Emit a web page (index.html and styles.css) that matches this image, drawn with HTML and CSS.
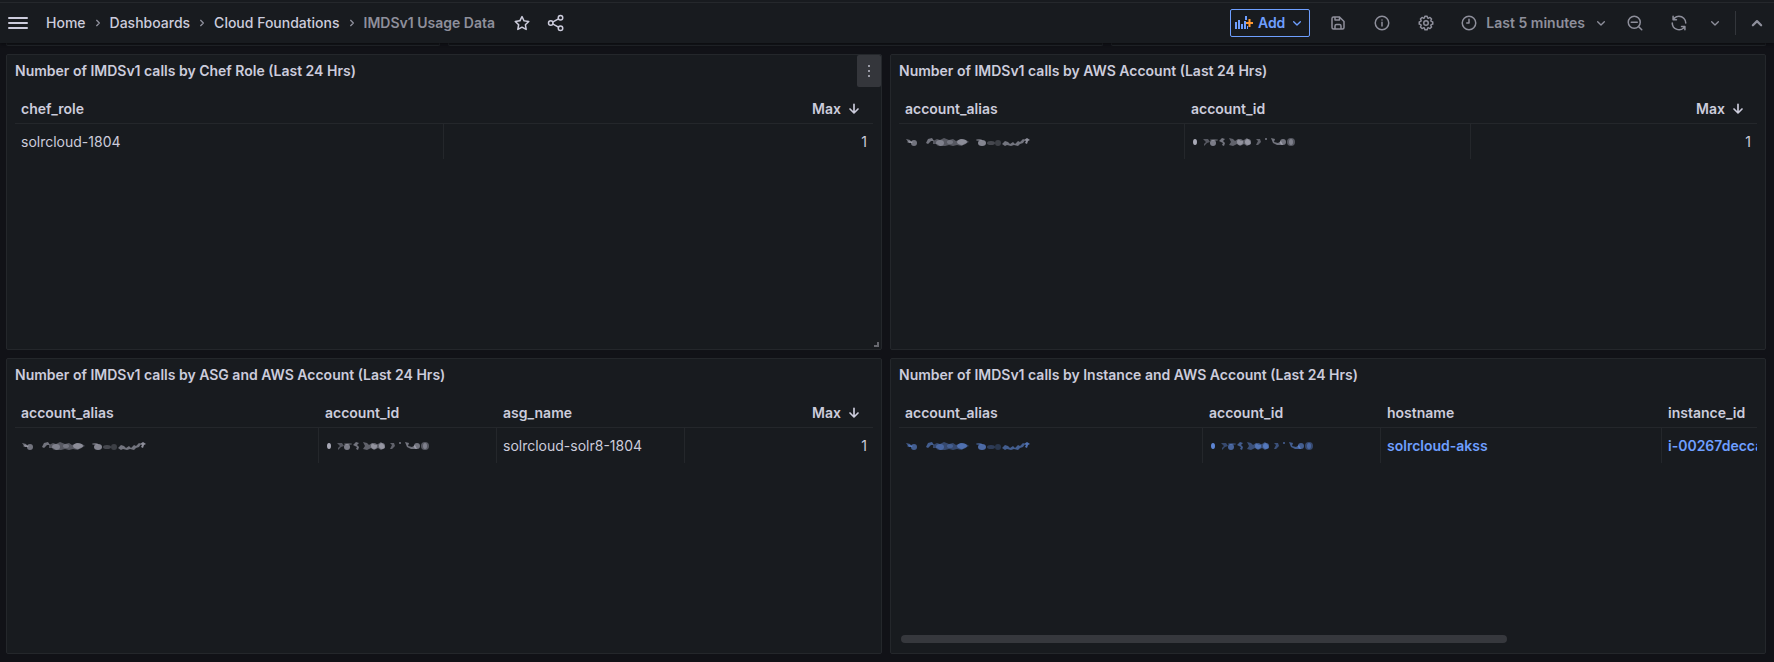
FILE: index.html
```html
<!DOCTYPE html>
<html lang="en">
<head>
	<meta charset="UTF-8">
	<meta name="viewport" content="width=device-width, initial-scale=1">
	<title>IMDSv1 Usage Data - Dashboards</title>
	<link rel="stylesheet" href="styles.css">
</head>
<body>
	<!-- shared icons -->
	<svg class="defs" aria-hidden="true">
		<symbol id="i-right" viewBox="0 0 24 24"><path class="line" d="M10 8l4 4-4 4"/></symbol>
		<symbol id="i-down" viewBox="0 0 24 24"><path class="line" d="M7 10l5 5 5-5"/></symbol>
		<symbol id="i-arrow" viewBox="0 0 24 24"><path class="line bold" d="M12 5v13M6 12l6 6 6-6"/></symbol>
		<symbol id="r-alias" viewBox="0 0 128 12">
			<g filter="url(#smudge)">
				<path d="M1 3l4 1 2 3-3 0zM21 7l2-4 4-1 2 3-3 0-3 3z" opacity=".5"/>
				<ellipse cx="9" cy="7" rx="3" ry="3" opacity=".5"/>
				<ellipse cx="5" cy="6" rx="3" ry="1" opacity=".3"/>
				<path d="M28 5l4-2 3 1 4-2 5 2 4-1 3 2 5-2 5 1 3 2-5 2-2 2-5-1-4 1-4-1-4 1-5 0-3-2-4 0z" opacity=".35"/>
				<ellipse cx="35" cy="7" rx="4" ry="3" opacity=".35"/>
				<ellipse cx="45" cy="6" rx="3" ry="2" opacity=".25"/>
				<ellipse cx="57" cy="6" rx="5" ry="3" opacity=".45"/>
				<ellipse cx="77" cy="7" rx="4" ry="3" opacity=".6"/>
				<ellipse cx="74" cy="4" rx="3" ry="1" opacity=".4"/>
				<ellipse cx="86" cy="7" rx="4" ry="2" opacity=".25"/>
				<ellipse cx="93" cy="7" rx="3" ry="3" opacity=".2"/>
				<path d="M97 8l3-3 3 1 2 2 3-2 2 2 3-3 2 1 3-3 2 1-2 3-3 1-2 2-4-1-3 1-4-1-2 1z" opacity=".5"/>
				<path d="M119 4l3-2 3 2-2 1-1 3-2-1 1-2z" opacity=".65"/>
			</g>
		</symbol>
		<symbol id="r-id" viewBox="0 0 108 12">
			<g filter="url(#smudge)">
				<ellipse cx="4" cy="6" rx="2" ry="3" opacity=".8"/>
				<path d="M12 3l5 0 2 3-3 1-3 3 0-2 2-2z" opacity=".35"/>
				<ellipse cx="22" cy="7" rx="3" ry="3" opacity=".55"/>
				<ellipse cx="23" cy="4" rx="4" ry="1" opacity=".3"/>
				<path d="M28 5l3-3 3 1-2 2 2 2-1 3-2-1 1-2z" opacity=".5"/>
				<path d="M38 2l4 1 2 2 3-2 3 2 3-1 3-2 3 3 1 3-4 2-3-2-4 2-3-2-4 2-4-1 2-3z" opacity=".4"/>
				<ellipse cx="49" cy="6" rx="3" ry="3" opacity=".45"/>
				<ellipse cx="57" cy="6" rx="3" ry="3" opacity=".5"/>
				<path d="M65 3l4 0 1 3-3 3-2 0 2-4zM74 2h2v2h-2z" opacity=".4"/>
				<path d="M80 2l4 1-1 3 4 1 3-2 2 4-6 0-4-2z" opacity=".5"/>
				<ellipse cx="92" cy="6" rx="3" ry="3" opacity=".5"/>
				<ellipse cx="100" cy="6" rx="4" ry="4" opacity=".35"/>
				<ellipse cx="100" cy="6" rx="2" ry="3" opacity=".35"/>
			</g>
		</symbol>
		<filter id="smudge"><feGaussianBlur stdDeviation="0.6"/></filter>
	</svg>

	<header class="topbar">
		<button class="menu" aria-label="Open menu"><span></span><span></span><span></span></button>
		<nav class="crumbs" aria-label="Breadcrumbs">
			<a href="#">Home</a>
			<svg class="icon"><use href="#i-right"/></svg>
			<a href="#">Dashboards</a>
			<svg class="icon"><use href="#i-right"/></svg>
			<a href="#">Cloud Foundations</a>
			<svg class="icon"><use href="#i-right"/></svg>
			<span class="current">IMDSv1 Usage Data</span>
		</nav>
		<button class="mark" aria-label="Mark as favorite">
			<svg class="icon big" viewBox="0 0 24 24"><path d="M22,9.67A1,1,0,0,0,21.14,9l-5.69-.83L12.9,3a1,1,0,0,0-1.8,0L8.55,8.16,2.86,9a1,1,0,0,0-.81.68,1,1,0,0,0,.25,1l4.13,4-1,5.68A1,1,0,0,0,6.9,21.44L12,18.77l5.1,2.67a.93.93,0,0,0,.46.12,1,1,0,0,0,.59-.19,1,1,0,0,0,.4-1l-1-5.68,4.13-4A1,1,0,0,0,22,9.67Zm-6.15,4a1,1,0,0,0-.29.88l.72,4.2-3.76-2a1.06,1.06,0,0,0-.94,0l-3.76,2,.72-4.2a1,1,0,0,0-.29-.88l-3-3,4.21-.61a1,1,0,0,0,.76-.55L12,5.7l1.88,3.82a1,1,0,0,0,.76.55l4.21.61Z"/></svg>
		</button>
		<button class="mark" aria-label="Share dashboard">
			<svg class="icon big" viewBox="0 0 24 24"><g class="line"><circle cx="5" cy="12" r="3"/><circle cx="18" cy="5" r="3"/><circle cx="18" cy="19" r="3"/><path d="M8 10.500l7.300-4M8 13.500l7.300 4"/></g></svg>
		</button>

		<div class="toolbar">
			<button class="add">
				<svg class="panel-add" viewBox="0 0 19 14"><path d="M0 6h2v7H0zM3 4h2v9H3zM6 8h2v5H6zM9 5h2v8H9zM10 0h2v4h-2zM12 10h1v3h-1z"/><path class="plus" d="M13.500 3h2v3H18v2h-2.500v3h-2V8H11V6h2.500z"/></svg>
				Add
				<svg class="icon"><use href="#i-down"/></svg>
			</button>
			<button class="tool" aria-label="Save dashboard">
				<svg class="icon big" viewBox="0 0 24 24"><path d="M20.710,9.290l-6-6a1,1,0,0,0-.32-.21A1.090,1.090,0,0,0,14,3H6A3,3,0,0,0,3,6V18a3,3,0,0,0,3,3H18a3,3,0,0,0,3-3V10A1,1,0,0,0,20.710,9.290ZM9,5h4V7H9Zm6,14H9V16a1,1,0,0,1,1-1h4a1,1,0,0,1,1,1Zm4-1a1,1,0,0,1-1,1H17V16a3,3,0,0,0-3-3H10a3,3,0,0,0-3,3v3H6a1,1,0,0,1-1-1V6A1,1,0,0,1,6,5H7V8A1,1,0,0,0,8,9h6a1,1,0,0,0,1-1V6.410l4,4Z"/></svg>
			</button>
			<button class="tool" aria-label="Dashboard insights">
				<svg class="icon big" viewBox="0 0 24 24"><g class="line"><circle cx="12" cy="12" r="9"/><path d="M12 11v5M12 8v0"/></g></svg>
			</button>
			<button class="tool" aria-label="Dashboard settings">
				<svg class="icon big" viewBox="0 0 24 24"><path d="M21.32,9.55l-1.89-.63.89-1.78A1,1,0,0,0,20.13,6L18,3.87a1,1,0,0,0-1.15-.19l-1.78.89-.63-1.89A1,1,0,0,0,13.5,2h-3a1,1,0,0,0-.95.68L8.92,4.57,7.14,3.68A1,1,0,0,0,6,3.87L3.87,6a1,1,0,0,0-.19,1.15l.89,1.78-1.89.63A1,1,0,0,0,2,10.5v3a1,1,0,0,0,.68.95l1.89.63-.89,1.78A1,1,0,0,0,3.87,18L6,20.13a1,1,0,0,0,1.15.19l1.78-.89.63,1.89a1,1,0,0,0,.95.68h3a1,1,0,0,0,.95-.68l.63-1.89,1.78.89A1,1,0,0,0,18,20.13L20.13,18a1,1,0,0,0,.19-1.15l-.89-1.78,1.89-.63A1,1,0,0,0,22,13.5v-3A1,1,0,0,0,21.32,9.55ZM20,12.78l-1.2.4A2,2,0,0,0,17.64,16l.57,1.14-1.1,1.1L16,17.64a2,2,0,0,0-2.79,1.16l-.4,1.2H11.22l-.4-1.2A2,2,0,0,0,8,17.64l-1.14.57-1.1-1.1L6.36,16A2,2,0,0,0,5.2,13.18L4,12.78V11.22l1.2-.4A2,2,0,0,0,6.36,8L5.79,6.89l1.1-1.1L8,6.36A2,2,0,0,0,10.82,5.2l.4-1.2h1.56l.4,1.2A2,2,0,0,0,16,6.36l1.14-.57,1.1,1.1L17.64,8a2,2,0,0,0,1.16,2.79l1.2.4ZM12,8a4,4,0,1,0,4,4A4,4,0,0,0,12,8Zm0,6a2,2,0,1,1,2-2A2,2,0,0,1,12,14Z"/></svg>
			</button>
			<button class="time">
				<svg class="icon big" viewBox="0 0 24 24"><g class="line"><circle cx="12" cy="12" r="9"/><path d="M12 7v5H9"/></g></svg>
				Last 5 minutes
				<svg class="icon caret"><use href="#i-down"/></svg>
			</button>
			<button class="tool" aria-label="Zoom out time range">
				<svg class="icon big" viewBox="0 0 24 24"><g class="line"><circle cx="11" cy="11" r="8"/><path d="M7 11h8M17 17l4 4"/></g></svg>
			</button>
			<button class="tool" aria-label="Refresh dashboard">
				<svg class="icon big" viewBox="0 0 24 24"><path d="M19.91,15.51H15.38a1,1,0,0,0,0,2h2.4A8,8,0,0,1,4,12a1,1,0,0,0-2,0,10,10,0,0,0,16.88,7.23V21a1,1,0,0,0,2,0V16.5A1,1,0,0,0,19.91,15.51ZM12,2A10,10,0,0,0,5.12,4.77V3a1,1,0,0,0-2,0V7.5a1,1,0,0,0,1,1h4.5a1,1,0,0,0,0-2H6.22A8,8,0,0,1,20,12a1,1,0,0,0,2,0A10,10,0,0,0,12,2Z"/></svg>
			</button>
			<button aria-label="Refresh interval"><svg class="icon"><use href="#i-down"/></svg></button>
			<span class="divider"></span>
			<button aria-label="Hide top bar"><svg class="icon big" viewBox="0 0 24 24"><path class="line thick" d="M6.500 15l5.500-5.500 5.500 5.500"/></svg></button>
		</div>
	</header>

	<!-- bottom edge of the row scrolled under the top bar -->
	<div class="scrolled-row"><div></div><div></div><div></div></div>

	<main class="grid">
		<section class="panel">
			<div class="panel-head">
				<h2>Number of IMDSv1 calls by Chef Role (Last 24 Hrs)</h2>
				<button class="kebab" aria-label="Panel menu"><i></i><i></i><i></i></button>
			</div>
			<div class="panel-body">
				<table>
					<thead>
						<tr><th>chef_role</th><th class="num">Max<svg class="icon sort"><use href="#i-arrow"/></svg></th></tr>
					</thead>
					<tbody>
						<tr><td>solrcloud-1804</td><td class="num">1</td></tr>
					</tbody>
				</table>
			</div>
			<span class="resize"></span>
		</section>

		<section class="panel">
			<div class="panel-head">
				<h2>Number of IMDSv1 calls by AWS Account (Last 24 Hrs)</h2>
			</div>
			<div class="panel-body">
				<table>
					<thead>
						<tr><th>account_alias</th><th>account_id</th><th class="num">Max<svg class="icon sort"><use href="#i-arrow"/></svg></th></tr>
					</thead>
					<tbody>
						<tr>
							<td><svg class="alias"><use href="#r-alias"/></svg></td>
							<td><svg class="id"><use href="#r-id"/></svg></td>
							<td class="num">1</td>
						</tr>
					</tbody>
				</table>
			</div>
		</section>

		<section class="panel">
			<div class="panel-head">
				<h2>Number of IMDSv1 calls by ASG and AWS Account (Last 24 Hrs)</h2>
			</div>
			<div class="panel-body">
				<table>
					<colgroup><col class="col-alias"><col class="col-id"><col><col></colgroup>
					<thead>
						<tr><th>account_alias</th><th>account_id</th><th>asg_name</th><th class="num">Max<svg class="icon sort"><use href="#i-arrow"/></svg></th></tr>
					</thead>
					<tbody>
						<tr>
							<td><svg class="alias"><use href="#r-alias"/></svg></td>
							<td><svg class="id"><use href="#r-id"/></svg></td>
							<td>solrcloud-solr8-1804</td>
							<td class="num">1</td>
						</tr>
					</tbody>
				</table>
			</div>
		</section>

		<section class="panel">
			<div class="panel-head">
				<h2>Number of IMDSv1 calls by Instance and AWS Account (Last 24 Hrs)</h2>
			</div>
			<div class="panel-body">
				<table class="wide">
					<colgroup><col class="col-alias"><col class="col-id"><col class="col-host"><col></colgroup>
					<thead>
						<tr><th>account_alias</th><th>account_id</th><th>hostname</th><th>instance_id</th></tr>
					</thead>
					<tbody>
						<tr>
							<td><a href="#" aria-label="Account alias"><svg class="alias"><use href="#r-alias"/></svg></a></td>
							<td><a href="#" aria-label="Account id"><svg class="id"><use href="#r-id"/></svg></a></td>
							<td><a href="#">solrcloud-akss</a></td>
							<td><a href="#">i-00267decca</a></td>
						</tr>
					</tbody>
				</table>
				<div class="scrollbar"><div class="thumb"></div></div>
			</div>
		</section>
	</main>
</body>
</html>
```

FILE: styles.css
```css
*{
	margin: 0;
	padding: 0;
	box-sizing: border-box;
}
body{
	background: #111217;
	color: #ccccdc;
	font: 14px/22px Inter, "Liberation Sans", sans-serif;
}
a{
	color: inherit;
	text-decoration: none;
}
button{
	display: flex;
	align-items: center;
	justify-content: center;
	border: 0;
	background: none;
	color: inherit;
	font: inherit;
	font-weight: 600;
	cursor: pointer;
}
.defs{
	position: absolute;
	width: 0;
	height: 0;
}
svg{
	fill: currentColor;
	flex: none;
}
.icon{
	width: 16px;
	height: 16px;
}
.icon.big{
	width: 18px;
	height: 18px;
}
.line{
	fill: none;
	stroke: currentColor;
	stroke-width: 2;
	stroke-linecap: round;
	stroke-linejoin: round;
}
.line.bold{
	stroke-width: 2.5;
}
.line.thick{
	stroke-width: 3;
}

/* top bar */
.topbar{
	position: relative;
	display: flex;
	align-items: center;
	height: 43px;
	padding: 3px 8px 0;
	background: linear-gradient(#25282c, #25282c) 0 2px / 100% 1px no-repeat #181b1f;
	box-shadow: 0 1px 3px #0a0b0e;
}
.menu{
	flex-direction: column;
	gap: 3px;
	width: 20px;
	margin-right: 18px;
}
.menu span{
	width: 20px;
	height: 2px;
	border-radius: 1px;
	background: #ccccdc;
}
.crumbs{
	display: flex;
	align-items: center;
	gap: 4px;
	margin-right: 18px;
	font-weight: 500;
	white-space: nowrap;
}
.crumbs .icon,
.crumbs .current{
	color: #8e8f9b;
}
.crumbs .current{
	font-weight: 600;
}
.mark{
	margin-right: 16px;
}
.toolbar{
	display: flex;
	align-items: center;
	gap: 12px;
	margin-left: auto;
	color: #8e8f9b;
}
.add{
	gap: 4px;
	height: 28px;
	padding: 0 4px;
	border: 1px solid #6e9fff;
	border-radius: 2px;
	color: #6e9fff;
}
.panel-add{
	width: 19px;
	height: 14px;
}
.plus{
	fill: #ff9830;
}
.tool{
	width: 32px;
	height: 32px;
}
.time{
	gap: 8px;
	margin-right: -2px;
	padding-left: 6px;
	white-space: nowrap;
}
.divider{
	width: 1px;
	height: 24px;
	background: #33363b;
}

/* dashboard grid */
.scrolled-row{
	display: grid;
	grid-template-columns: 434fr 655fr 655fr;
	gap: 8px;
	height: 3px;
	padding: 0 8px 0 6px;
}
.scrolled-row div{
	border: 1px solid #24272b;
	border-top: 0;
	border-radius: 0 0 2px 2px;
	background: #14161a;
}
.grid{
	display: grid;
	grid-template-columns: repeat(2, minmax(0, 1fr));
	grid-auto-rows: 296px;
	gap: 8px;
	padding: 8px 8px 8px 6px;
}
.panel{
	position: relative;
	display: flex;
	flex-direction: column;
	border: 1px solid #24272b;
	border-radius: 2px;
	background: #181b1f;
}
.panel-head{
	display: flex;
	align-items: center;
	justify-content: space-between;
	height: 32px;
	padding-left: 8px;
}
.panel-head h2{
	font-size: 14px;
	font-weight: 600;
	white-space: nowrap;
}
.kebab{
	flex-direction: column;
	gap: 3px;
	width: 24px;
	height: 32px;
	border-radius: 2px;
	background: #34363b;
}
.kebab i{
	width: 2px;
	height: 2px;
	background: #9a9ba6;
}
.panel-body{
	display: flex;
	flex: 1;
	flex-direction: column;
	justify-content: space-between;
	padding: 8px 0 10px;
	margin: 0 8px;
	overflow: hidden;
}
.resize{
	position: absolute;
	right: 2px;
	bottom: 2px;
	width: 5px;
	height: 5px;
	border: solid #66676e;
	border-width: 0 2px 2px 0;
}

/* tables */
table{
	width: 100%;
	table-layout: fixed;
	border-collapse: separate;
	border-spacing: 0;
}
table.wide{
	width: 1210px;
}
.col-alias{
	width: 304px;
}
.col-id{
	width: 178px;
}
.col-host{
	width: 281px;
}
th{
	height: 29px;
	padding: 0 6px;
	border-bottom: 1px solid #24272b;
	font-weight: 600;
	text-align: left;
}
td{
	height: 35px;
	padding: 0 6px;
	border-right: 1px solid #24272b;
	white-space: nowrap;
}
td:last-child{
	border-right: 0;
}
td a{
	color: #6e9fff;
	font-weight: 600;
}
.num{
	text-align: right;
}
.sort{
	margin: 0 5px;
	vertical-align: text-bottom;
}
.alias,
.id{
	display: block;
	width: 128px;
	height: 12px;
}
.id{
	width: 108px;
}
.scrollbar{
	padding: 0 2px;
}
.thumb{
	width: 71%;
	height: 8px;
	border-radius: 4px;
	background: #36383d;
}
```
